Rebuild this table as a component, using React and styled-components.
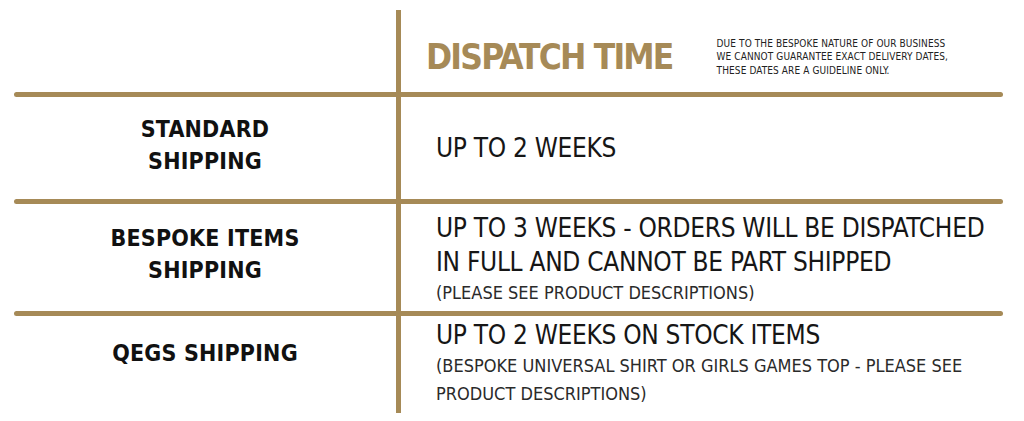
import React from 'react'
import styled, { createGlobalStyle } from 'styled-components'

const GOLD = '#a68a57'

const Global = createGlobalStyle`
  html, body {
    margin: 0;
    padding: 0;
    background: #fff;
  }
  body {
    font-family: "DejaVu Sans Condensed", "DejaVu Sans", sans-serif;
    font-stretch: condensed;
    color: #111;
  }
`

const Table = styled.div`
  display: grid;
  grid-template-columns: 382px 5px 602px;
  grid-template-rows: 82px 5px 102px 5px 107px 5px 97px;
  width: 989px;
  margin: 10px 0 0 14px;
`

const Label = styled.div`
  display: flex;
  align-items: center;
  justify-content: center;
  text-align: center;
  font-size: 23px;
  font-weight: 700;
  line-height: 32px;
  letter-spacing: 0.2px;
  padding-bottom: ${p => p.$lift || 0}px;
`

const Rule = styled.div`
  background: ${GOLD};
`

const Divider = styled.div`
  grid-column: 1 / -1;
  background: ${GOLD};
  border-radius: 3px;
`

const Cell = styled.div`
  display: flex;
  flex-direction: column;
  justify-content: center;
  padding-left: 35px;
  padding-top: ${p => p.$shift || 0}px;
  padding-bottom: ${p => p.$lift || 0}px;
`

const HeaderCell = styled.div`
  display: flex;
  align-items: center;
  padding: 12px 0 0 25px;
`

const Title = styled.h1`
  margin: 0;
  color: ${GOLD};
  font-size: 35px;
  font-weight: 700;
  letter-spacing: -1.8px;
  white-space: nowrap;
`

const Note = styled.p`
  margin: 0 0 0 44px;
  font-size: 10px;
  line-height: 13.5px;
  color: #222;
  letter-spacing: 0.1px;
`

const Main = styled.div`
  font-size: 26px;
  font-weight: 300;
  line-height: 34px;
  color: #161616;
  letter-spacing: -0.3px;
`

const Sub = styled.div`
  font-size: 18px;
  font-weight: 300;
  line-height: 28px;
  color: #2a2a2a;
`

export default function App() {
  return (
    <>
      <Global />
      <Table>
        <div />
        <Rule />
        <HeaderCell>
          <Title>DISPATCH TIME</Title>
          <Note>
            DUE TO THE BESPOKE NATURE OF OUR BUSINESS<br />
            WE CANNOT GUARANTEE EXACT DELIVERY DATES,<br />
            THESE DATES ARE A GUIDELINE ONLY.
          </Note>
        </HeaderCell>

        <Divider />

        <Label $lift={6}>STANDARD<br />SHIPPING</Label>
        <Rule />
        <Cell>
          <Main>UP TO 2 WEEKS</Main>
        </Cell>

        <Divider />

        <Label $lift={8}>BESPOKE ITEMS<br />SHIPPING</Label>
        <Rule />
        <Cell $shift={2}>
          <Main>UP TO 3 WEEKS - ORDERS WILL BE DISPATCHED<br />IN FULL AND CANNOT BE PART SHIPPED</Main>
          <Sub>(PLEASE SEE PRODUCT DESCRIPTIONS)</Sub>
        </Cell>

        <Divider />

        <Label $lift={24}>QEGS SHIPPING</Label>
        <Rule />
        <Cell $lift={4}>
          <Main>UP TO 2 WEEKS ON STOCK ITEMS</Main>
          <Sub>(BESPOKE UNIVERSAL SHIRT OR GIRLS GAMES TOP - PLEASE SEE<br />PRODUCT DESCRIPTIONS)</Sub>
        </Cell>
      </Table>
    </>
  )
}
